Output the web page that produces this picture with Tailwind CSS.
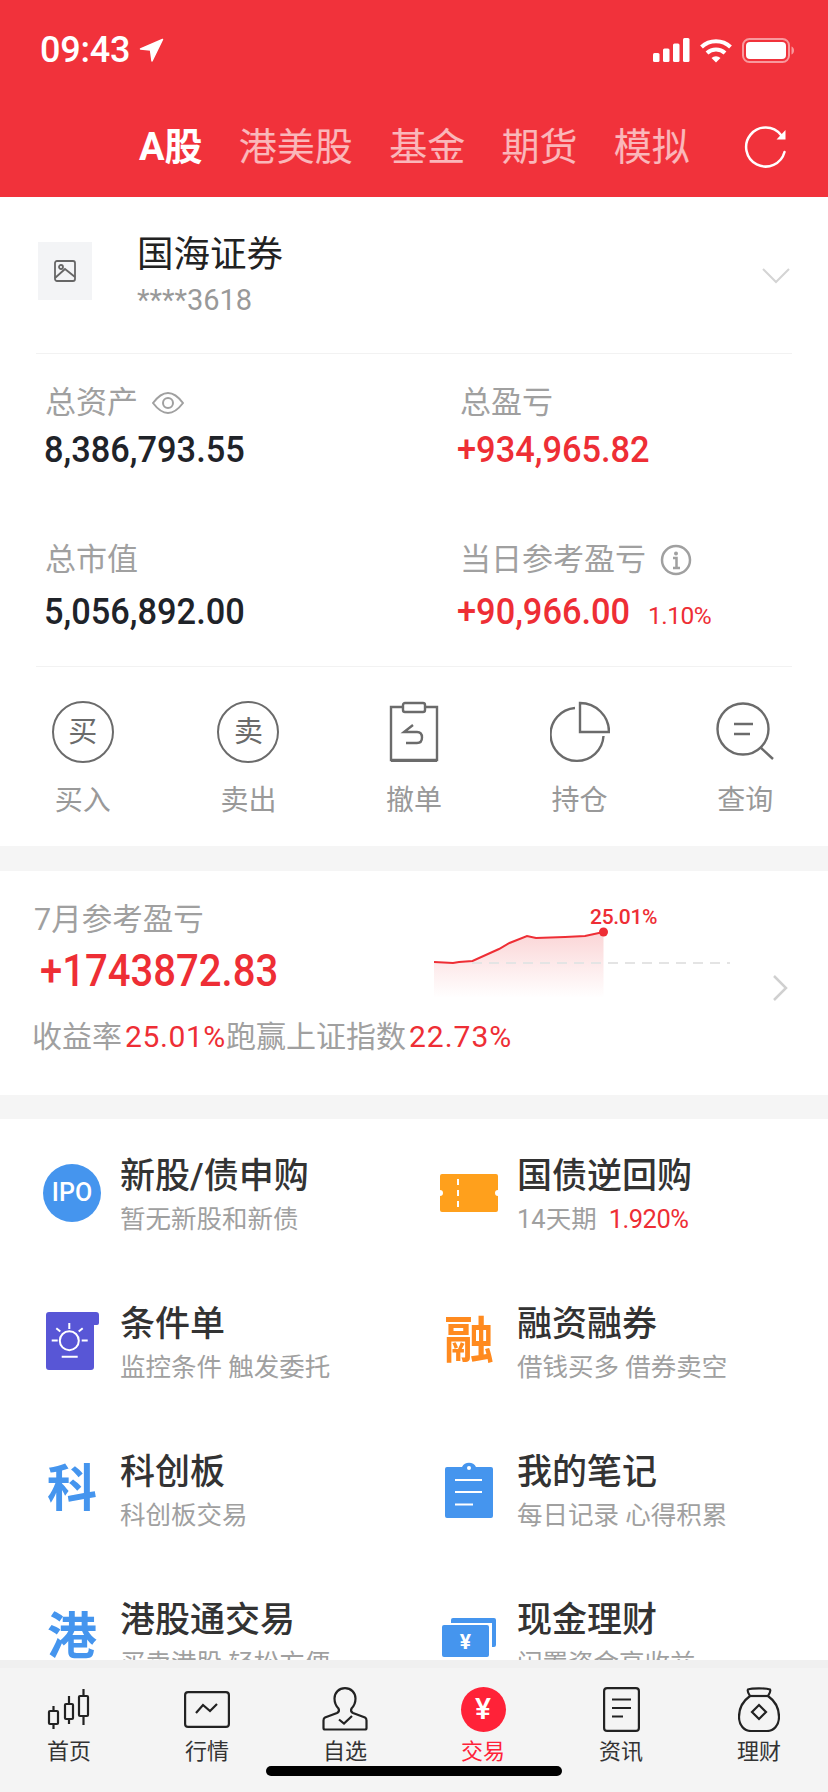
<!DOCTYPE html>
<html lang="zh-CN">
  <head>
    <meta charset="UTF-8" />
    <meta name="viewport" content="width=device-width, initial-scale=1.0" />
    <script src="https://cdn.jsdelivr.net/npm/@tailwindcss/browser@4"></script>
    <title>交易</title>
  </head>
  <body class="bg-white [font-family:Roboto,'Noto_Sans_CJK_SC',sans-serif]">
    <div class="w-[828px] h-[1792px] flex flex-col overflow-hidden">

      <!-- 顶部红色区域 -->
      <header class="h-[197px] shrink-0 bg-[#f1323b] text-white">
        <div class="h-[70px] pt-[30px] pl-[40px] pr-[34px] flex items-center justify-between">
          <div class="flex items-center gap-[9px]">
            <span class="text-[36px] leading-[40px] font-medium tracking-[-0.2px]">09:43</span>
            <svg width="25" height="25" viewBox="0 0 25 25" fill="#fff" stroke="#fff" stroke-width="1.500" stroke-linejoin="round"><path d="M23.500 1.500 L1.500 11 L11.500 12 L13 23 Z"/></svg>
          </div>
          <div class="flex items-center gap-[10px]">
            <svg width="37" height="24" viewBox="0 0 37 24" fill="#fff">
              <rect x="0" y="15" width="6.500" height="9" rx="1.500"/>
              <rect x="10" y="10.500" width="6.500" height="13.500" rx="1.500"/>
              <rect x="20" y="5.500" width="6.500" height="18.500" rx="1.500"/>
              <rect x="30" y="0" width="6.500" height="24" rx="1.500"/>
            </svg>
            <svg width="32" height="25" viewBox="0 0 32 25" fill="none" stroke="#fff" stroke-width="4">
              <path d="M1.500 9 A21 21 0 0 1 30.500 9"/>
              <path d="M7 15 A13 13 0 0 1 25 15"/>
              <path d="M16 24.500 L11.500 20 A6.500 6.500 0 0 1 20.500 20 Z" fill="#fff" stroke="none"/>
            </svg>
            <svg width="52" height="25" viewBox="0 0 52 25" fill="none">
              <rect x="1" y="1" width="46" height="23" rx="6.500" stroke="#fff" stroke-opacity="0.5" stroke-width="2"/>
              <rect x="4" y="4" width="40" height="17" rx="4" fill="#fff"/>
              <path d="M49.500 8.500 C51 9 52 10.500 52 12.500 C52 14.500 51 16 49.500 16.500 Z" fill="#fff" fill-opacity="0.5"/>
            </svg>
          </div>
        </div>
        <nav class="mt-[52px] h-[50px] pl-[139px] pr-[40px] flex items-center justify-between">
          <div class="flex gap-[36.3px] text-[38px] leading-[50px] text-white/65">
            <span class="font-bold text-white">A股</span>
            <span>港美股</span>
            <span>基金</span>
            <span>期货</span>
            <span>模拟</span>
          </div>
          <svg width="44" height="44" viewBox="0 0 44 44" fill="none" stroke="#fff" stroke-width="2.500" stroke-linecap="round">
            <path d="M37 10 A19.500 19.500 0 1 0 40.500 27"/>
            <path d="M41.500 5 V14.500 H32.500 Z" fill="#fff" stroke="none"/>
          </svg>
        </nav>
      </header>

      <main class="flex-1 min-h-0 overflow-hidden bg-[#f5f5f5]">
        <!-- 账户 -->
        <section class="bg-white h-[649px]">
          <div class="h-[157px] mx-[36px] border-b border-[#f2f2f2] flex items-start pt-[36px]">
            <div class="ml-[2px] mt-[9px] w-[54px] h-[58px] bg-[#f3f4f6] flex items-center justify-center">
              <svg width="22" height="22" viewBox="0 0 22 22" fill="none" stroke="#666" stroke-width="1.800">
                <rect x="1" y="1" width="20" height="20" rx="2"/>
                <circle cx="7" cy="7" r="2"/>
                <path d="M1 18 L11 9 L21 17"/>
              </svg>
            </div>
            <div class="ml-[45px]">
              <div class="text-[36.5px] leading-[44px] text-[#222]">国海证券</div>
              <div class="mt-[5px] text-[29px] leading-[36px] text-[#999]">****3618</div>
            </div>
            <svg class="ml-auto mr-[2px] mt-[35px]" width="28" height="16" viewBox="0 0 28 16" fill="none" stroke="#d4d4d4" stroke-width="2"><path d="M1 1 L14 14 L27 1"/></svg>
          </div>

          <div class="h-[313px] mx-[36px] border-b border-[#f2f2f2] grid grid-cols-[415px_1fr] grid-rows-[157px_156px] pl-[9px] pt-[29px]">
            <div>
              <div class="flex items-center gap-[14px] text-[31px] leading-[40px] text-[#a0a0a0]">
                <span>总资产</span>
                <svg width="32" height="22" viewBox="0 0 32 22" fill="none" stroke="#a0a0a0" stroke-width="2"><path d="M1 11 C7 3 11 1 16 1 C21 1 25 3 31 11 C25 19 21 21 16 21 C11 21 7 19 1 11 Z"/><circle cx="16" cy="11" r="5"/></svg>
              </div>
              <div class="mt-[5px] -ml-[1px] origin-left scale-x-[0.955] text-[36px] leading-[44px] font-medium text-[#1f2329]">8,386,793.55</div>
            </div>
            <div>
              <div class="text-[31px] leading-[40px] text-[#a0a0a0]">总盈亏</div>
              <div class="mt-[5px] -ml-[3px] origin-left scale-x-[0.955] text-[36px] leading-[44px] font-medium text-[#ee2e35]">+934,965.82</div>
            </div>
            <div>
              <div class="text-[31px] leading-[40px] text-[#a0a0a0]">总市值</div>
              <div class="mt-[10px] -ml-[1px] origin-left scale-x-[0.955] text-[36px] leading-[44px] font-medium text-[#1f2329]">5,056,892.00</div>
            </div>
            <div>
              <div class="flex items-center gap-[14px] text-[31px] leading-[40px] text-[#a0a0a0]">
                <span>当日参考盈亏</span>
                <svg width="32" height="32" viewBox="0 0 32 32" fill="none" stroke="#a0a0a0" stroke-width="2.500"><circle cx="16" cy="16" r="14"/><circle cx="16" cy="9.500" r="2" fill="#a0a0a0" stroke="none"/><path d="M13 14 H16.500 V24 M13 24 H20"/></svg>
              </div>
              <div class="mt-[10px] -ml-[3px] flex items-baseline text-[#ee2e35]">
                <span class="w-[191px] origin-left scale-x-[0.955] text-[36px] leading-[44px] font-medium">+90,966.00</span>
                <span class="text-[24.5px] leading-[44px] tracking-[-0.5px]">1.10%</span>
              </div>
            </div>
          </div>

          <!-- 快捷操作 -->
          <div class="h-[179px] grid grid-cols-5 text-center text-[28px] leading-[36px] text-[#999]">
            <div class="flex flex-col items-center pt-[34px]">
              <div class="h-[62px] flex items-center">
                <div class="w-[62px] h-[62px] rounded-full border-[2.5px] border-[#6b6b6b] flex items-center justify-center text-[29px] text-[#6b6b6b]">买</div>
              </div>
              <span class="mt-[20px]">买入</span>
            </div>
            <div class="flex flex-col items-center pt-[34px]">
              <div class="h-[62px] flex items-center">
                <div class="w-[62px] h-[62px] rounded-full border-[2.5px] border-[#6b6b6b] flex items-center justify-center text-[29px] text-[#6b6b6b]">卖</div>
              </div>
              <span class="mt-[20px]">卖出</span>
            </div>
            <div class="flex flex-col items-center pt-[34px]">
              <svg width="50" height="62" viewBox="0 0 50 62" fill="none" stroke="#6b6b6b" stroke-width="2.400">
                <path d="M13 6 H2 V59 H48 V6 H37"/>
                <rect x="14" y="2" width="22" height="9" rx="2"/>
                <path d="M24 24 L15 31 H28 Q33 31 33 36.500 Q33 42 28 42 H17"/>
                <path d="M2 59.500 H48" stroke-width="3"/>
              </svg>
              <span class="mt-[20px]">撤单</span>
            </div>
            <div class="flex flex-col items-center pt-[34px]">
              <svg width="60" height="62" viewBox="0 0 60 62" fill="none" stroke="#6b6b6b" stroke-width="2.400">
                <path d="M25 7 A26.500 26.500 0 1 0 53.500 35"/>
                <path d="M30 2 V31 H59 A29 29 0 0 0 30 2 Z"/>
              </svg>
              <span class="mt-[20px]">持仓</span>
            </div>
            <div class="flex flex-col items-center pt-[34px]">
              <svg width="58" height="62" viewBox="0 0 58 62" fill="none" stroke="#6b6b6b" stroke-width="2.400">
                <circle cx="27" cy="28" r="25.500"/>
                <path d="M18 23 H37 M18 33 H34"/>
                <path d="M44 46 L57 58"/>
              </svg>
              <span class="mt-[20px]">查询</span>
            </div>
          </div>
        </section>

        <!-- 7月参考盈亏 -->
        <section class="mt-[25px] h-[224px] bg-white pt-[29px] pl-[34px]">
          <div class="h-[117px] flex">
            <div class="w-[366px]">
              <div class="text-[30.5px] leading-[40px] text-[#a0a0a0]">7月参考盈亏</div>
              <div class="mt-[3px] ml-[6px] origin-left scale-x-[0.91] text-[44px] leading-[56px] font-medium text-[#ee2e35]">+1743872.83</div>
            </div>
            <svg width="330" height="100" viewBox="0 0 330 100" fill="none">
              <defs>
                <linearGradient id="areaFill" x1="0" y1="0" x2="0" y2="1">
                  <stop offset="0" stop-color="#fbd5d6"/>
                  <stop offset="1" stop-color="#ffffff"/>
                </linearGradient>
              </defs>
              <path d="M34 62 L53 63 L59 62 L72.500 61 L99 49 L109.500 43 L127 36 L136 38 L165 37 L185 36 L203.500 32 V98 H34 Z" fill="url(#areaFill)"/>
              <path d="M72 63 H330" stroke="#e4e4e4" stroke-width="2" stroke-dasharray="10 7"/>
              <path d="M34 62 L53 63 L59 62 L72.500 61 L99 49 L109.500 43 L127 36 L136 38 L165 37 L185 36 L203.500 32" stroke="#ee2e35" stroke-width="2"/>
              <circle cx="203.500" cy="32" r="4.500" fill="#ee2e35"/>
              <text x="190" y="24" font-size="21" font-weight="500" fill="#ee2e35" font-family="Roboto" letter-spacing="-0.3">25.01%</text>
            </svg>
            <svg class="ml-[42px] mt-[75px]" width="16" height="26" viewBox="0 0 16 26" fill="none" stroke="#d0d0d0" stroke-width="2.500"><path d="M2 1 L14 13 L2 25"/></svg>
          </div>
          <div class="-ml-[2px] text-[30px] leading-[40px] text-[#a0a0a0]">收益率<span class="ml-[3px] tracking-[0.6px] text-[#ee2e35]">25.01%</span>跑赢上证指数<span class="ml-[3px] tracking-[1px] text-[#ee2e35]">22.73%</span></div>
        </section>

        <!-- 功能入口 -->
        <section class="mt-[24px] bg-white grid grid-cols-[397px_431px] auto-rows-[148px]">
          <div class="flex items-center">
            <div class="w-[96px] ml-[24px] flex justify-center">
              <div class="w-[58px] h-[58px] rounded-full bg-[#4595ee] text-white text-[25px] font-medium flex items-center justify-center">IPO</div>
            </div>
            <div class="mt-[8px]">
              <div class="text-[35px] leading-[40px] font-medium text-[#333]">新股/债申购</div>
              <div class="mt-[4px] text-[25.5px] leading-[36px] text-[#a0a0a0]">暂无新股和新债</div>
            </div>
          </div>
          <div class="flex items-center">
            <div class="w-[96px] ml-[24px] flex justify-center">
              <svg width="58" height="38" viewBox="0 0 58 38">
                <path d="M2 0 H56 a2 2 0 0 1 2 2 V16 a3 3 0 0 0 0 6 V36 a2 2 0 0 1 -2 2 H2 a2 2 0 0 1 -2 -2 V22 a3 3 0 0 0 0 -6 V2 a2 2 0 0 1 2 -2 Z" fill="#ffa01c"/>
                <path d="M18 5 V33" stroke="#fff" stroke-width="2" stroke-dasharray="6 5"/>
              </svg>
            </div>
            <div class="mt-[8px]">
              <div class="text-[35px] leading-[40px] font-medium text-[#333]">国债逆回购</div>
              <div class="mt-[4px] text-[25.5px] leading-[36px] text-[#a0a0a0]">14天期<span class="ml-[12px] tracking-[-0.5px] text-[#ee2e35]">1.920%</span></div>
            </div>
          </div>
          <div class="flex items-center">
            <div class="w-[96px] ml-[24px] flex justify-center">
              <svg width="53" height="58" viewBox="0 0 53 58" fill="none" stroke="#fff" stroke-width="2">
                <path d="M3 0 H50 a3 3 0 0 1 3 3 V11 a2 2 0 0 1 -2 2 H48 V55 a3 3 0 0 1 -3 3 H3 a3 3 0 0 1 -3 -3 V3 a3 3 0 0 1 3 -3 Z" fill="#5856d6" stroke="none"/>
                <circle cx="23.300" cy="28.700" r="9.500"/>
                <path d="M23.300 11 V17 M5.700 28.400 H11.700 M35.700 28.400 H41.700 M10.300 16.300 L14.300 19.600 M36.700 16.300 L32.700 19.600 M15.700 44.700 H31.700"/>
              </svg>
            </div>
            <div class="mt-[8px]">
              <div class="text-[35px] leading-[40px] font-medium text-[#333]">条件单</div>
              <div class="mt-[4px] text-[25.5px] leading-[36px] text-[#a0a0a0]">监控条件 触发委托</div>
            </div>
          </div>
          <div class="flex items-center">
            <div class="w-[96px] ml-[24px] flex justify-center text-[50px] leading-[58px] font-bold text-[#ff8a1f]">融</div>
            <div class="mt-[8px]">
              <div class="text-[35px] leading-[40px] font-medium text-[#333]">融资融券</div>
              <div class="mt-[4px] text-[25.5px] leading-[36px] text-[#a0a0a0]">借钱买多 借券卖空</div>
            </div>
          </div>
          <div class="flex items-center">
            <div class="w-[96px] ml-[24px] flex justify-center text-[50px] leading-[58px] font-bold text-[#4595ee]">科</div>
            <div class="mt-[8px]">
              <div class="text-[35px] leading-[40px] font-medium text-[#333]">科创板</div>
              <div class="mt-[4px] text-[25.5px] leading-[36px] text-[#a0a0a0]">科创板交易</div>
            </div>
          </div>
          <div class="flex items-center">
            <div class="w-[96px] ml-[24px] flex justify-center">
              <svg width="48" height="58" viewBox="0 0 48 58">
                <path d="M2 7 H17 A8 8 0 0 1 31 7 H46 a2 2 0 0 1 2 2 V56 a2 2 0 0 1 -2 2 H2 a2 2 0 0 1 -2 -2 V9 a2 2 0 0 1 2 -2 Z" fill="#4595ee"/>
                <circle cx="24" cy="8" r="2" fill="#fff"/>
                <path d="M10 20 H37 M10 32 H37 M10 44.500 H28" stroke="#fff" stroke-width="2"/>
              </svg>
            </div>
            <div class="mt-[8px]">
              <div class="text-[35px] leading-[40px] font-medium text-[#333]">我的笔记</div>
              <div class="mt-[4px] text-[25.5px] leading-[36px] text-[#a0a0a0]">每日记录 心得积累</div>
            </div>
          </div>
          <div class="flex items-center">
            <div class="w-[96px] ml-[24px] flex justify-center text-[50px] leading-[58px] font-bold text-[#4595ee]">港</div>
            <div class="mt-[8px]">
              <div class="text-[35px] leading-[40px] font-medium text-[#333]">港股通交易</div>
              <div class="mt-[4px] text-[25.5px] leading-[36px] text-[#a0a0a0]">买卖港股 轻松方便</div>
            </div>
          </div>
          <div class="flex items-center">
            <div class="w-[96px] ml-[24px] flex justify-center">
              <svg width="54" height="39" viewBox="0 0 54 39">
                <path d="M11 0 H52 a2 2 0 0 1 2 2 V27 a2 2 0 0 1 -2 2 H50 V5 H9 V2 a2 2 0 0 1 2 -2 Z" fill="#4595ee"/>
                <rect x="0" y="7" width="47" height="32" rx="2" fill="#4595ee"/>
                <text x="23.500" y="31" text-anchor="middle" font-size="21" font-weight="700" fill="#fff" font-family="Roboto">¥</text>
              </svg>
            </div>
            <div class="mt-[8px]">
              <div class="text-[35px] leading-[40px] font-medium text-[#333]">现金理财</div>
              <div class="mt-[4px] text-[25.5px] leading-[36px] text-[#a0a0a0]">闲置资金高收益</div>
            </div>
          </div>
        </section>
      </main>

      <!-- 底部导航 -->
      <footer class="relative z-10 h-[132px] shrink-0 bg-[#f4f4f4] border-t-[8px] border-[#f0f0f0] grid grid-cols-6 pt-[17px] text-center text-[22px] leading-[22px] text-[#333]">
        <div class="flex flex-col items-center">
          <div class="h-[48px] flex items-center">
            <svg width="44" height="42" viewBox="0 0 44 42" fill="none" stroke="#222" stroke-width="2.200">
              <rect x="2" y="23" width="9" height="13" rx="1"/><path d="M6.500 18 V23 M6.500 36 V41"/>
              <rect x="18" y="16" width="8" height="15" rx="1"/><path d="M22 8 V16 M22 31 V36"/>
              <rect x="32" y="8" width="9" height="20" rx="1"/><path d="M36.500 1 V8 M36.500 28 V37"/>
            </svg>
          </div>
          <span class="mt-[8px]">首页</span>
        </div>
        <div class="flex flex-col items-center">
          <div class="h-[48px] flex items-center">
            <svg width="46" height="37" viewBox="0 0 46 37" fill="none" stroke="#222" stroke-width="2.200">
              <rect x="1.100" y="1.100" width="43.800" height="34.800" rx="3"/>
              <path d="M12 22 L19 14 L26 20 L33 13"/>
            </svg>
          </div>
          <span class="mt-[8px]">行情</span>
        </div>
        <div class="flex flex-col items-center">
          <div class="h-[48px] flex items-center">
            <svg width="46" height="44" viewBox="0 0 46 44" fill="none" stroke="#222" stroke-width="2.200">
              <path d="M16.500 21.500 C14 19 12.500 15.500 12.500 11.500 C12.500 5.500 17 1.200 23 1.200 C29 1.200 33.500 5.500 33.500 11.500 C33.500 15.500 32 19 29.500 21.500 C28.500 23.500 29 25 31 26 L43 30.500 C44 31 44.500 32 44.500 33.500 V41 C44.500 42 44 42.500 43 42.500 H3 C2 42.500 1.500 42 1.500 41 V33.500 C1.500 32 2 31 3 30.500 L15 26 C17 25 17.500 23.500 16.500 21.500 Z"/>
              <path d="M17 32.500 L22 36.500 L30 29"/>
            </svg>
          </div>
          <span class="mt-[8px]">自选</span>
        </div>
        <div class="flex flex-col items-center text-[#ff2238]">
          <div class="h-[48px] flex items-center">
            <div class="w-[45px] h-[45px] rounded-full bg-[#ff2238] text-white text-[30px] font-medium flex items-center justify-center">¥</div>
          </div>
          <span class="mt-[8px]">交易</span>
        </div>
        <div class="flex flex-col items-center">
          <div class="h-[48px] flex items-center">
            <svg width="37" height="45" viewBox="0 0 37 45" fill="none" stroke="#222" stroke-width="2.200">
              <rect x="1.100" y="1.100" width="34.800" height="42.800" rx="3"/>
              <path d="M9 12.500 H28 M9 21 H28 M9 29.500 H20"/>
            </svg>
          </div>
          <span class="mt-[8px]">资讯</span>
        </div>
        <div class="flex flex-col items-center">
          <div class="h-[48px] flex items-center">
            <svg width="42" height="45" viewBox="0 0 42 45" fill="none" stroke="#222" stroke-width="2.200">
              <path d="M12 9 C10 6 9 4 10 2.500 C14 1 28 1 32 2.500 C33 4 32 6 30 9 C37 14 41 21 41 30 C41 38 36 44 29 44 H13 C6 44 1 38 1 30 C1 21 5 14 12 9 Z"/>
              <path d="M12 9 H30"/>
              <path d="M21 18 L28 25 L21 32 L14 25 Z"/>
            </svg>
          </div>
          <span class="mt-[8px]">理财</span>
        </div>
        <div class="absolute left-[266px] top-[98px] w-[296px] h-[10px] rounded-full bg-black"></div>
      </footer>
    </div>
  </body>
</html>
